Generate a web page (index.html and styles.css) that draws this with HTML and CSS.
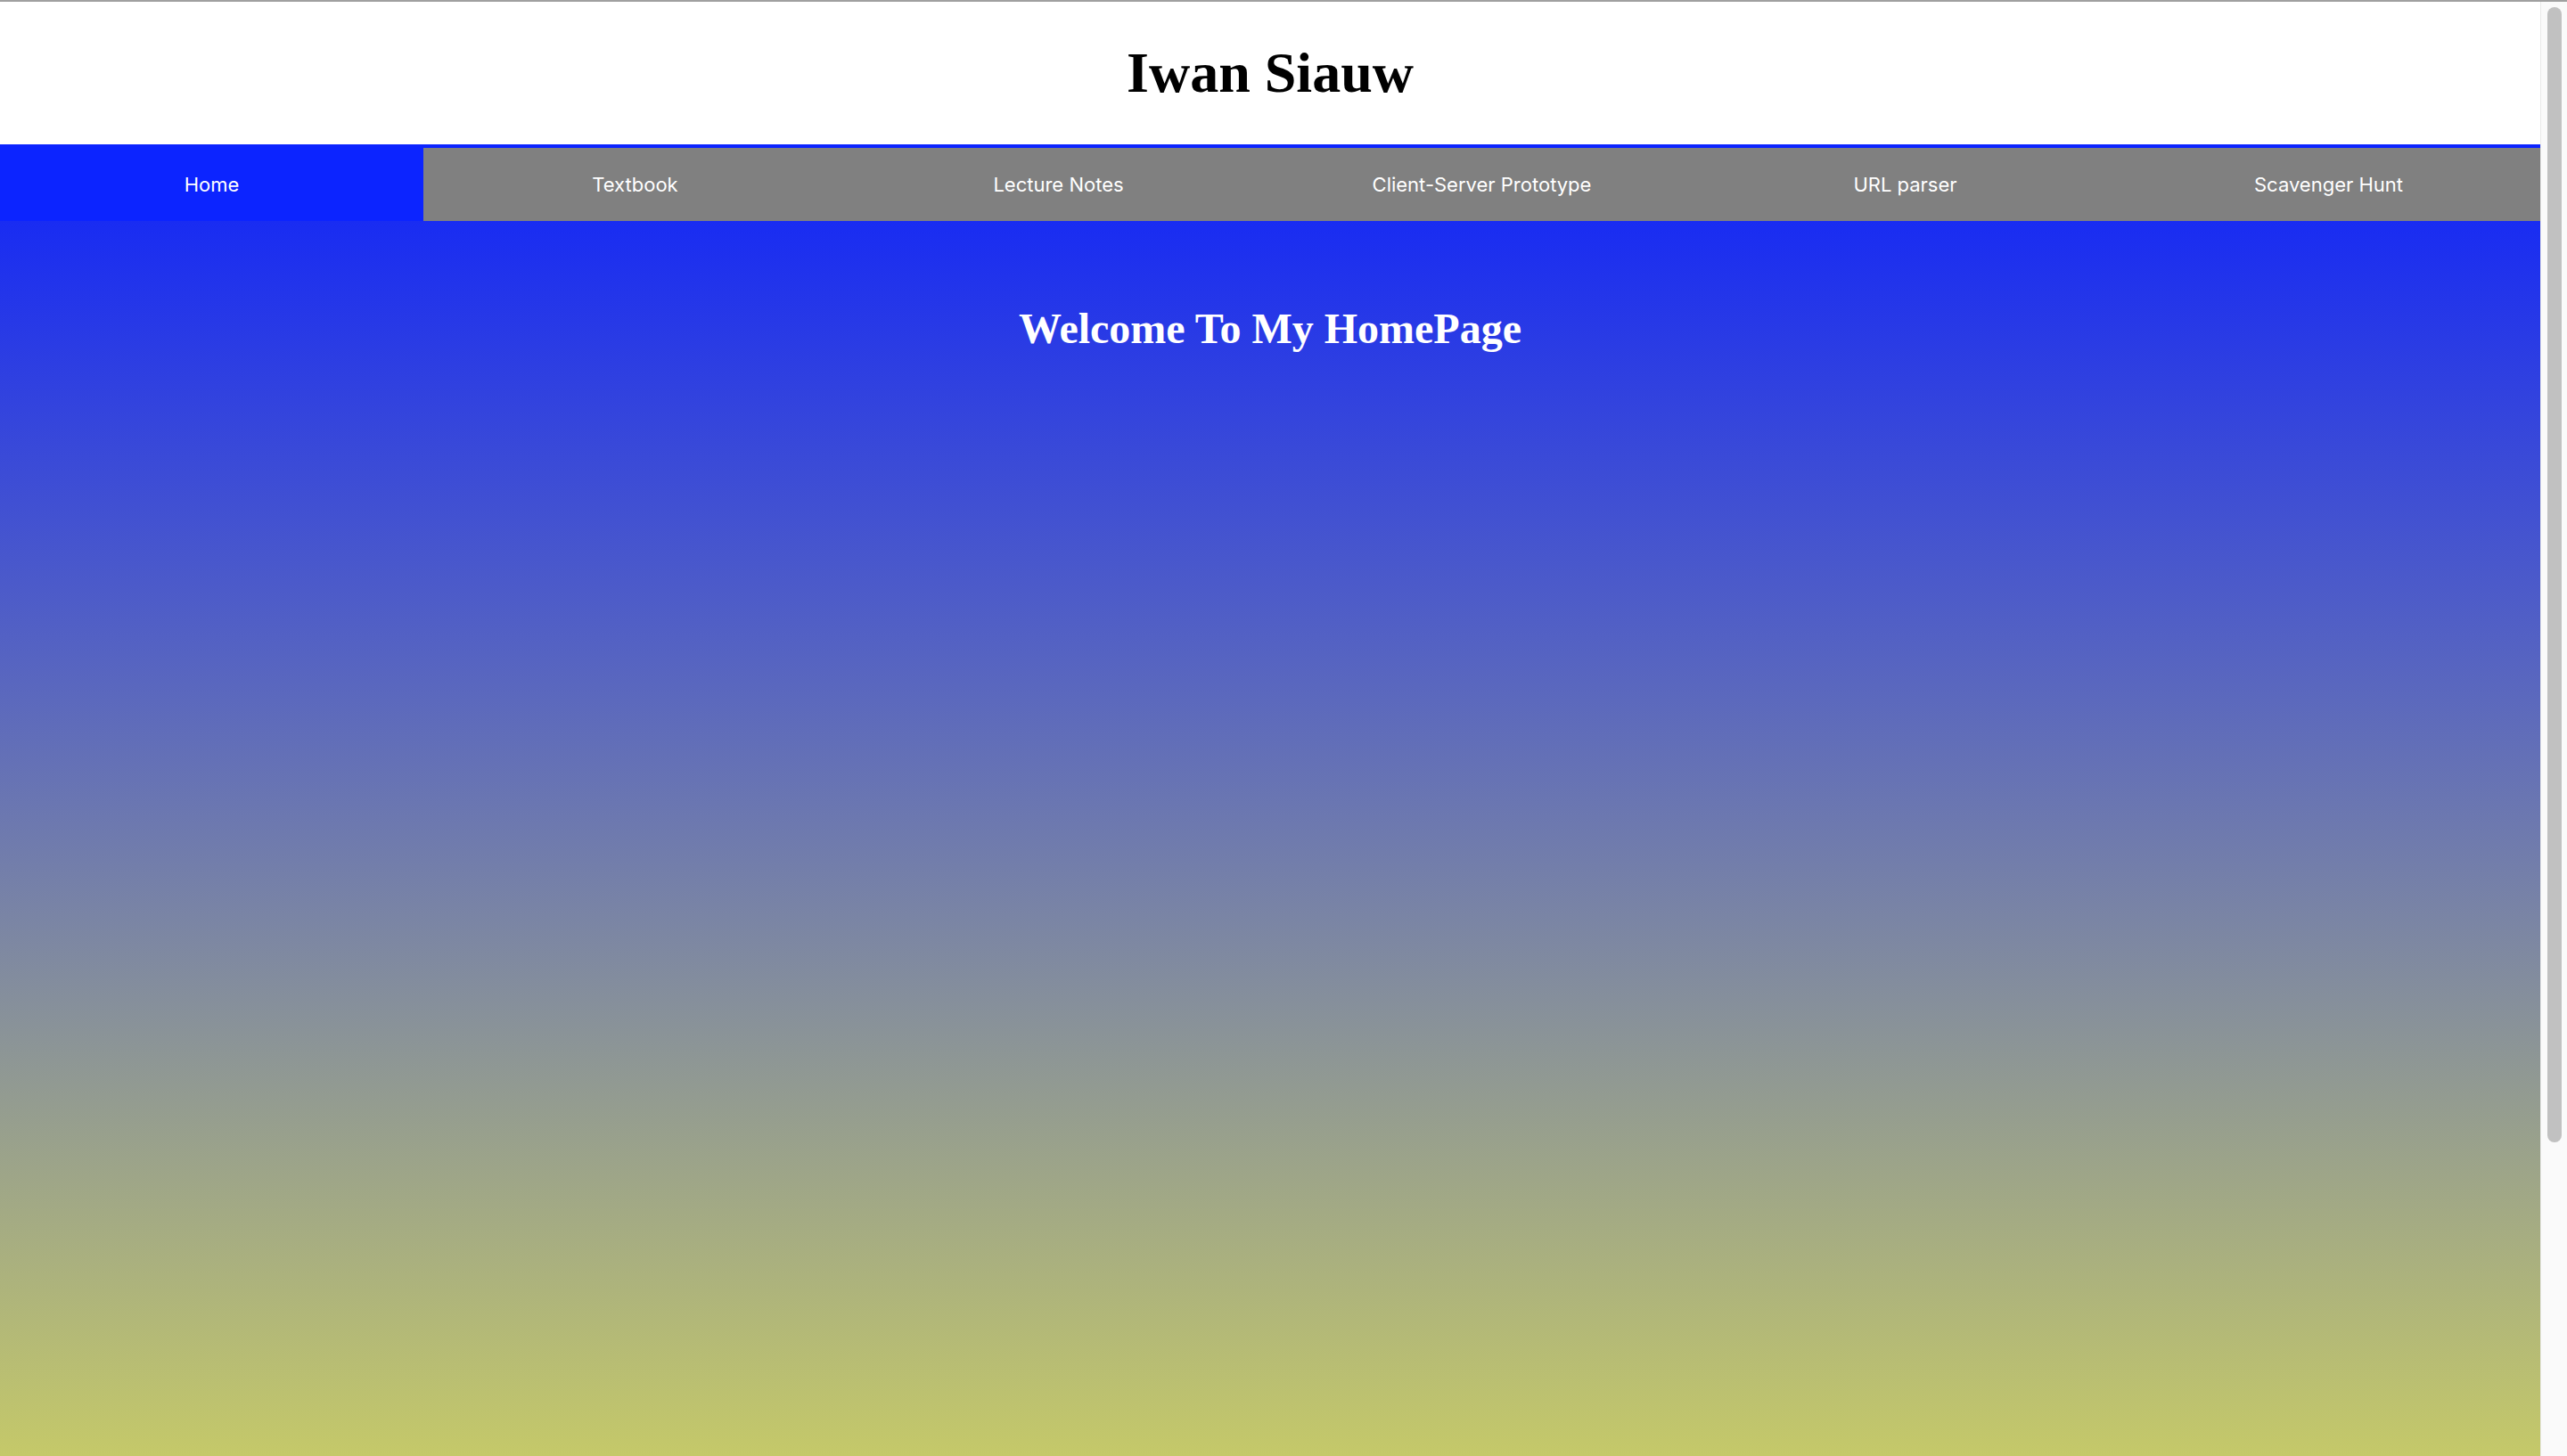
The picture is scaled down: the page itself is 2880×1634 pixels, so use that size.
FILE: index.html
```html
<!DOCTYPE html>
<html lang="en">
<head>
<meta charset="utf-8">
<title>Iwan Siauw</title>
<link rel="stylesheet" href="styles.css">
</head>
<body>
<div class="page">
  <header class="site-header">
    <h1 class="site-title">Iwan Siauw</h1>
  </header>
  <nav class="main-nav">
    <a class="nav-link active" href="#">Home</a>
    <a class="nav-link" href="#">Textbook</a>
    <a class="nav-link" href="#">Lecture Notes</a>
    <a class="nav-link" href="#">Client-Server Prototype</a>
    <a class="nav-link" href="#">URL parser</a>
    <a class="nav-link" href="#">Scavenger Hunt</a>
  </nav>
  <main class="content">
    <h2 class="welcome">Welcome To My HomePage</h2>
  </main>
</div>
<div class="scroll-rail" aria-hidden="true">
  <div class="scroll-thumb"></div>
</div>
</body>
</html>
```

FILE: styles.css
```css
html {
  height: 100%;
}

body {
  margin: 0;
  box-sizing: border-box;
  height: 100vh;
  overflow: hidden;
  display: flex;
  border-top: 2px solid #a0a0a0;
  font-family: "Liberation Serif", "Times New Roman", serif;
}

.page {
  flex: 1 1 auto;
  min-width: 0;
  overflow: hidden;
  display: flex;
  flex-direction: column;
}

.site-header {
  background: #ffffff;
  text-align: center;
}

.site-title {
  margin: 0;
  padding: 43px 0;
  font-size: 64px;
  line-height: 74px;
  font-weight: bold;
  color: #000000;
}

.main-nav {
  display: flex;
  background: #0c24ff;
  padding-top: 4px;
}

.nav-link {
  flex: 1 1 0;
  height: 82px;
  display: flex;
  align-items: center;
  justify-content: center;
  background: #808080;
  color: #ffffff;
  font-family: Inter, "Liberation Sans", sans-serif;
  font-size: 22px;
  text-decoration: none;
}

.nav-link.active {
  background: #0c24ff;
}

.content {
  flex: 0 0 auto;
  box-sizing: border-box;
  min-height: 1847px;
  padding-top: 53px;
  background: linear-gradient(to bottom, #192cf2 0px, #c5c969 1386px, #ecef4c 1847px);
}

.welcome {
  margin: 0;
  padding: 40px 0;
  text-align: center;
  color: #ffffff;
  font-size: 48px;
  line-height: 55px;
  font-weight: bold;
}

.scroll-rail {
  flex: 0 0 30px;
  box-sizing: border-box;
  background: #fafafa;
  border-left: 1px solid #e8e8e8;
  padding: 6px 6px 0 7px;
}

.scroll-thumb {
  height: 1274px;
  background: #c1c1c1;
  border-radius: 8px;
}
```
